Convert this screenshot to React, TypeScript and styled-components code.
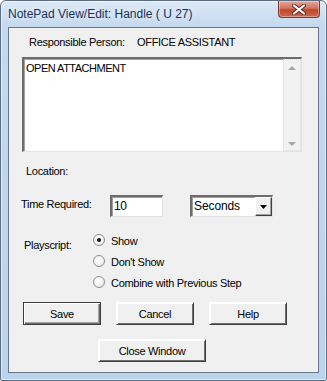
import React from 'react';
import styled, { createGlobalStyle } from 'styled-components';

export default function App() {
  return (
    <>
      <GlobalStyle />
      <Window>
        <TitleBar>
          <Title>NotePad View/Edit: Handle ( U 27)</Title>
          <CloseButton aria-label="Close">
            <svg width="14" height="11" viewBox="0 0 14 11">
              <path d="M2 1.5 L12 9.5 M12 1.5 L2 9.5" stroke="#5a2a24" strokeWidth="4" strokeLinecap="round" />
              <path d="M2 1.5 L12 9.5 M12 1.5 L2 9.5" stroke="#ffffff" strokeWidth="2.2" strokeLinecap="round" />
            </svg>
          </CloseButton>
        </TitleBar>

        <Client>
          <InfoRow>
            <InfoLabel>Responsible Person:</InfoLabel>
            <Text>OFFICE ASSISTANT</Text>
          </InfoRow>

          <NoteBox>
            <NoteText>OPEN ATTACHMENT</NoteText>
            <ScrollTrack>
              <Arrow $up />
              <Arrow />
            </ScrollTrack>
          </NoteBox>

          <Label $indent={17} $top={13}>Location:</Label>

          <TimeRow>
            <TimeLabel>Time Required:</TimeLabel>
            <Field>10</Field>
            <Combo>
              <ComboText>Seconds</ComboText>
              <ComboButton>
                <svg width="7" height="4" viewBox="0 0 7 4">
                  <path d="M0 0 H7 L3.5 4 Z" fill="#000" />
                </svg>
              </ComboButton>
            </Combo>
          </TimeRow>

          <PlayRow>
            <PlayLabel>Playscript:</PlayLabel>
            <RadioList>
              <RadioRow>
                <Radio $checked />
                <Text>Show</Text>
              </RadioRow>
              <RadioRow>
                <Radio />
                <Text>Don't Show</Text>
              </RadioRow>
              <RadioRow>
                <Radio />
                <Text>Combine with Previous Step</Text>
              </RadioRow>
            </RadioList>
          </PlayRow>

          <ButtonRow>
            <Button $default>Save</Button>
            <Button>Cancel</Button>
            <Button>Help</Button>
          </ButtonRow>

          <CloseRow>
            <Button $wide>Close Window</Button>
          </CloseRow>
        </Client>
      </Window>
    </>
  );
}

const GlobalStyle = createGlobalStyle`
  html, body {
    margin: 0;
    padding: 0;
    background: #ffffff;
  }
  body {
    font-family: "Liberation Sans", Arial, sans-serif;
  }
`;

const Window = styled.div`
  box-sizing: border-box;
  width: 327px;
  height: 381px;
  display: flex;
  flex-direction: column;
  border: 1px solid #5d6e84;
  border-radius: 6px 6px 2px 2px;
  background: linear-gradient(180deg, #dce9f7 0px, #c5d9ef 24px, #bcd3ec 100%);
  box-shadow: inset 0 0 0 1px rgba(255, 255, 255, 0.55);
`;

const TitleBar = styled.div`
  height: 26px;
  display: flex;
  justify-content: space-between;
  align-items: flex-start;
  padding: 0 6px 0 7px;
`;

const Title = styled.span`
  margin-top: 6px;
  font-size: 12px;
  line-height: 14px;
  color: #17305a;
  text-shadow: 0 0 6px rgba(255, 255, 255, 0.9);
`;

const CloseButton = styled.div`
  box-sizing: border-box;
  width: 42px;
  height: 17px;
  display: flex;
  align-items: center;
  justify-content: center;
  border: 1px solid #7a3a32;
  border-top: none;
  border-radius: 0 0 4px 4px;
  background: linear-gradient(180deg, #e6a699 0%, #d3735f 45%, #c0442d 55%, #cc6a4e 100%);
  box-shadow: inset 0 0 0 1px rgba(255, 255, 255, 0.35);
`;

const Client = styled.div`
  flex: 1;
  margin: 0 7px 7px;
  border: 1px solid #67778b;
  background: #f0f0f0;
  display: flex;
  flex-direction: column;
`;

const Text = styled.span`
  font-size: 11px;
  line-height: 13px;
  letter-spacing: -0.3px;
  color: #000;
  white-space: nowrap;
`;

const InfoRow = styled.div`
  margin-top: 8px;
  padding-left: 20px;
  display: flex;
`;

const InfoLabel = styled(Text)`
  width: 108px;
`;

const NoteBox = styled.div`
  box-sizing: border-box;
  margin: 8px 0 0 13px;
  width: 280px;
  height: 95px;
  display: flex;
  background: #fff;
  border-style: solid;
  border-width: 2px 1px 1px 2px;
  border-color: #6d6d6d #e3e3e3 #e3e3e3 #6d6d6d;
  box-shadow: inset 1px 1px 0 #a0a0a0;
`;

const NoteText = styled(Text)`
  flex: 1;
  padding: 3px 0 0 2px;
  letter-spacing: -0.5px;
`;

const ScrollTrack = styled.div`
  width: 16px;
  display: flex;
  flex-direction: column;
  justify-content: space-between;
  align-items: center;
  padding: 6px 0 4px;
  background: #f2f2f2;
  border: 1px dotted #dcdcdc;
`;

const Arrow = styled.div<{ $up?: boolean }>`
  width: 0;
  height: 0;
  border-left: 4px solid transparent;
  border-right: 4px solid transparent;
  ${(p) => (p.$up ? 'border-bottom: 4px solid #a6a6a6;' : 'border-top: 4px solid #a6a6a6;')}
`;

const Label = styled(Text)<{ $indent: number; $top: number }>`
  display: block;
  margin-top: ${(p) => p.$top}px;
  padding-left: ${(p) => p.$indent}px;
`;

const TimeRow = styled.div`
  margin-top: 17px;
  padding-left: 12px;
  display: flex;
  align-items: center;
  height: 22px;
`;

const TimeLabel = styled(Text)`
  width: 89px;
  margin-top: -3px;
`;

const sunken = `
  box-sizing: border-box;
  height: 22px;
  background: #fff;
  border-style: solid;
  border-width: 2px 1px 1px 2px;
  border-color: #6d6d6d #e3e3e3 #e3e3e3 #6d6d6d;
  box-shadow: inset 1px 1px 0 #a0a0a0;
`;

const Field = styled(Text)`
  ${sunken}
  width: 53px;
  padding: 3px 0 0 2px;
  font-size: 12px;
`;

const Combo = styled.div`
  ${sunken}
  margin-left: 27px;
  width: 83px;
  display: flex;
  align-items: stretch;
`;

const ComboText = styled(Text)`
  flex: 1;
  padding: 3px 0 0 2px;
  font-size: 12px;
  letter-spacing: -0.1px;
`;

const ComboButton = styled.div`
  box-sizing: border-box;
  width: 17px;
  display: flex;
  align-items: center;
  justify-content: center;
  background: #f0f0f0;
  border-style: solid;
  border-width: 1px;
  border-color: #ffffff #404040 #404040 #ffffff;
  box-shadow: inset -1px -1px 0 #a0a0a0;
`;

const PlayRow = styled.div`
  margin-top: 14px;
  padding-left: 15px;
  display: flex;
  align-items: flex-start;
`;

const PlayLabel = styled(Text)`
  width: 69px;
  margin-top: 8px;
`;

const RadioList = styled.div`
  display: flex;
  flex-direction: column;
`;

const RadioRow = styled.div`
  height: 21px;
  display: flex;
  align-items: center;
  gap: 6px;
`;

const Radio = styled.span<{ $checked?: boolean }>`
  box-sizing: border-box;
  width: 12px;
  height: 12px;
  margin-top: -4px;
  border-radius: 50%;
  border: 1px solid #8e8f8f;
  background: radial-gradient(circle at 40% 40%, #ffffff 0%, #f4f4f4 50%, #d6d6d6 100%);
  display: flex;
  align-items: center;
  justify-content: center;

  &::after {
    content: '';
    width: 4px;
    height: 4px;
    border-radius: 50%;
    background: ${(p) => (p.$checked ? '#111' : 'transparent')};
  }
`;

const ButtonRow = styled.div`
  margin-top: 8px;
  padding-left: 14px;
  display: flex;
  gap: 15px;
`;

const CloseRow = styled.div`
  margin-top: 14px;
  padding-left: 89px;
  display: flex;
`;

const Button = styled.div<{ $default?: boolean; $wide?: boolean }>`
  box-sizing: border-box;
  width: ${(p) => (p.$wide ? 108 : 78)}px;
  height: 23px;
  display: flex;
  align-items: center;
  justify-content: center;
  font-size: 11px;
  letter-spacing: -0.3px;
  color: #000;
  background: #f0f0f0;
  border: 1px solid ${(p) => (p.$default ? '#3c3c3c' : '#dcdcdc')};
  box-shadow: ${(p) =>
    p.$default
      ? 'inset 1px 1px 0 #ffffff, inset -1px -1px 0 #6d6d6d, inset -2px -2px 0 #a0a0a0'
      : 'inset 1px 1px 0 #ffffff, inset -1px -1px 0 #6d6d6d'};
  border-color: ${(p) => (p.$default ? '#3c3c3c' : '#ffffff #404040 #404040 #ffffff')};
`;
